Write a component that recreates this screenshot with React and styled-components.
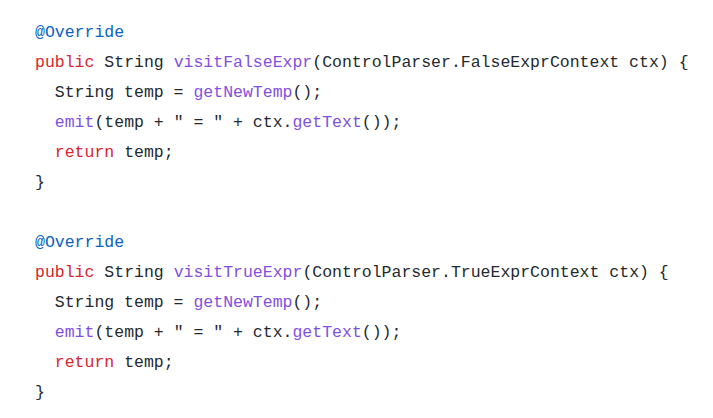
import React from "react";
import styled, { createGlobalStyle } from "styled-components";

const GlobalStyle = createGlobalStyle`
  html, body {
    margin: 0;
    padding: 0;
    background: #ffffff;
  }
`;

const lines = [
  [["ann", "@Override"]],
  [["kw", "public"], ["txt", " String "], ["fn", "visitFalseExpr"], ["txt", "(ControlParser.FalseExprContext ctx) {"]],
  [["txt", "  String temp = "], ["fn", "getNewTemp"], ["txt", "();"]],
  [["txt", "  "], ["fn", "emit"], ["txt", "(temp + \" = \" + ctx."], ["fn", "getText"], ["txt", "());"]],
  [["txt", "  "], ["kw", "return"], ["txt", " temp;"]],
  [["txt", "}"]],
  [],
  [["ann", "@Override"]],
  [["kw", "public"], ["txt", " String "], ["fn", "visitTrueExpr"], ["txt", "(ControlParser.TrueExprContext ctx) {"]],
  [["txt", "  String temp = "], ["fn", "getNewTemp"], ["txt", "();"]],
  [["txt", "  "], ["fn", "emit"], ["txt", "(temp + \" = \" + ctx."], ["fn", "getText"], ["txt", "());"]],
  [["txt", "  "], ["kw", "return"], ["txt", " temp;"]],
  [["txt", "}"]],
];

const App = () => {
  return (
    <>
      <GlobalStyle />
      <CodeBlock>
        {lines.map((line, i) => (
          <Line key={i}>
            {line.length === 0
              ? "\u00a0"
              : line.map(([kind, text], j) => (
                  <Token key={j} $kind={kind}>
                    {text}
                  </Token>
                ))}
          </Line>
        ))}
      </CodeBlock>
    </>
  );
};

const colors = {
  ann: "#0a62c2",
  kw: "#d7262e",
  fn: "#8250df",
  txt: "#24292f",
};

const CodeBlock = styled.pre`
  margin: 0;
  padding: 18px 0 0 35px;
  font-family: "Liberation Mono", "DejaVu Sans Mono", monospace;
  font-size: 16.5px;
  line-height: 30px;
  color: #24292f;
  background: #ffffff;
`;

const Line = styled.div`
  height: 30px;
  white-space: pre;
`;

const Token = styled.span`
  color: ${({ $kind }) => colors[$kind]};
`;

export default App;
